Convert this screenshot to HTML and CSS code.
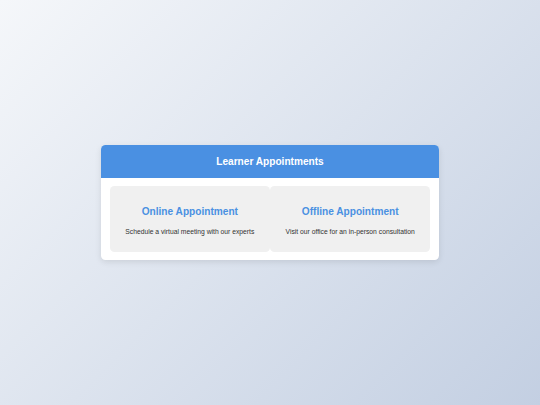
FILE: index.html
```html
<!DOCTYPE html>
<html lang="en">
<head>
<meta charset="utf-8">
<title>Learner Appointments</title>
<link rel="stylesheet" href="styles.css">
</head>
<body>
<div class="card">
  <div class="card-header">Learner Appointments</div>
  <div class="card-body">
    <div class="option">
      <h3 class="option-title">Online Appointment</h3>
      <p class="option-desc">Schedule a virtual meeting with our experts</p>
    </div>
    <div class="option">
      <h3 class="option-title">Offline Appointment</h3>
      <p class="option-desc">Visit our office for an in-person consultation</p>
    </div>
  </div>
</div>
</body>
</html>
```
FILE: styles.css
```css
* { box-sizing: border-box; }
html, body { height: 100%; }
body {
  margin: 0;
  font-family: "Liberation Sans", Arial, sans-serif;
  background: linear-gradient(135deg, #f5f7fa 0%, #c3cfe2 100%);
  display: flex;
  align-items: center;
  justify-content: center;
}
.card {
  width: 337.5px;
  background: #fff;
  border-radius: 4.5px;
  box-shadow: 0 2px 6px rgba(0, 0, 0, 0.1);
  overflow: hidden;
}
.card-header {
  background: #4a90e2;
  color: #fff;
  text-align: center;
  font-weight: bold;
  font-size: 10.125px;
  line-height: 11.6px;
  padding: 10.5px 8px;
}
.card-body {
  display: flex;
  padding: 8.4px;
}
.option {
  flex: 1;
  background: #f0f0f0;
  border-radius: 4.5px;
  text-align: center;
  padding: 19.5px 8px 16px;
}
.option-title {
  margin: 0 0 10px;
  color: #4a90e2;
  font-size: 10.125px;
  line-height: 12px;
  font-weight: bold;
}
.option-desc {
  margin: 0;
  color: #333;
  font-size: 6.75px;
  line-height: 8px;
}
```
